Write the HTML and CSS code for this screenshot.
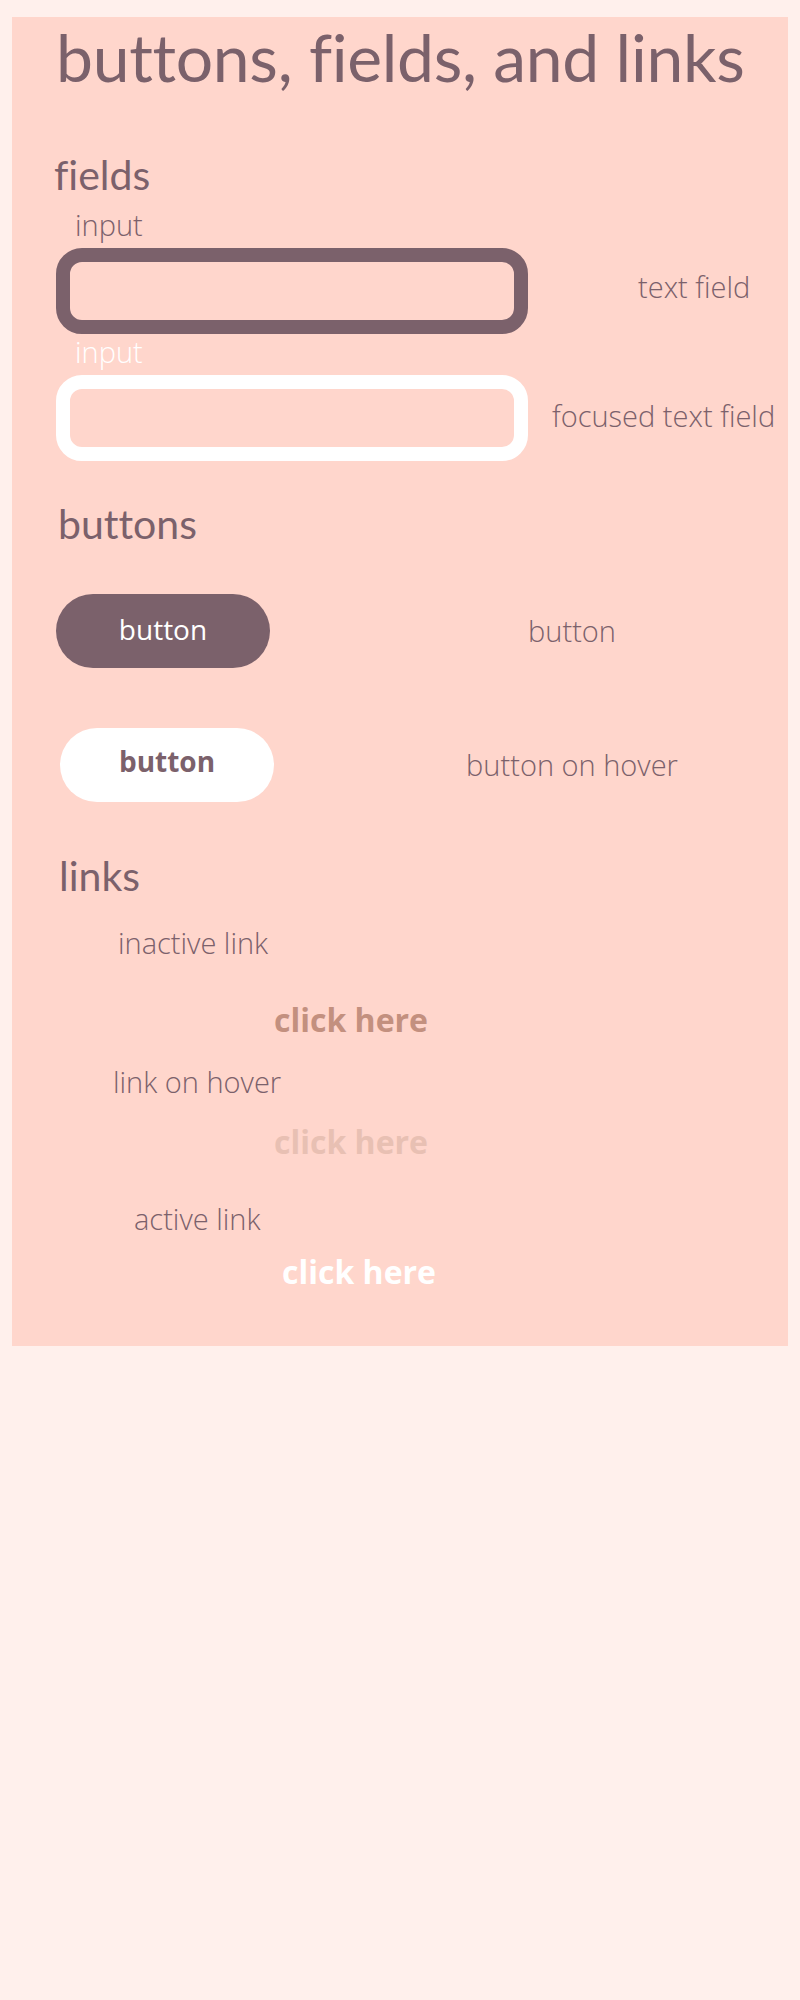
FILE: index.html
```html
<!DOCTYPE html>
<html lang="en">
<head>
<meta charset="utf-8">
<title>buttons, fields, and links</title>
<link rel="stylesheet" href="styles.css">
</head>
<body>
<main class="panel">
  <h1 class="title">buttons, fields, and links</h1>

  <section class="fields">
    <h2 class="heading heading-fields">fields</h2>
    <label class="input-label">input</label>
    <div class="field-row">
      <input class="field" type="text" aria-label="input">
      <span class="state state-text">text field</span>
    </div>
    <label class="input-label input-label-focus">input</label>
    <div class="field-row field-row-focus">
      <input class="field field-focus" type="text" aria-label="input">
      <span class="state state-focus">focused text field</span>
    </div>
  </section>

  <section class="buttons">
    <h2 class="heading heading-buttons">buttons</h2>
    <div class="button-row">
      <button class="btn" type="button">button</button>
      <span class="state state-btn">button</span>
    </div>
    <div class="button-row button-row-hover">
      <button class="btn btn-hover" type="button">button</button>
      <span class="state state-btn state-btn-hover">button on hover</span>
    </div>
  </section>

  <section class="links">
    <h2 class="heading heading-links">links</h2>
    <p class="link-label link-label-inactive">inactive link</p>
    <a class="link link-inactive" href="#">click here</a>
    <p class="link-label link-label-hover">link on hover</p>
    <a class="link link-hover" href="#">click here</a>
    <p class="link-label link-label-active">active link</p>
    <a class="link link-active" href="#">click here</a>
  </section>
</main>
</body>
</html>
```
FILE: styles.css
```css
html, body {
  margin: 0;
  padding: 0;
  background: #fff0ec;
}

body {
  color: #7b616b;
  font-family: "Open Sans", "Liberation Sans", sans-serif;
}

.panel {
  margin: 17px 12px 0;
  padding: 7px 0 58px 44px;
  background: #ffd6cc;
  display: flex;
  flex-direction: column;
  align-items: flex-start;
}

.title {
  margin: 0;
  font-family: Lato, "Liberation Sans", sans-serif;
  font-weight: 400;
  font-size: 66px;
  line-height: 66px;
  letter-spacing: -0.3px;
  font-variant-ligatures: none;
  color: #7b616b;
}

section {
  display: flex;
  flex-direction: column;
  align-items: flex-start;
  align-self: stretch;
}

.heading {
  margin: 0;
  font-family: Lato, "Liberation Sans", sans-serif;
  font-weight: 400;
  font-size: 41px;
  line-height: 41px;
  font-variant-ligatures: none;
  color: #7b616b;
}

.heading-fields { margin: 64px 0 0 -2px; }
.heading-buttons { margin: 42px 0 0 2px; }
.heading-links { margin: 53px 0 0 3px; }

.input-label {
  display: block;
  margin: 15px 0 0 19px;
  font-size: 29px;
  line-height: 29px;
  font-weight: 300;
  color: #7b616b;
}

.input-label-focus {
  margin-top: 3px;
  color: #ffffff;
}

.field-row {
  display: flex;
  align-items: center;
  margin-top: 9px;
}

.field-row-focus { margin-top: 9px; }

.field {
  -webkit-appearance: none;
  appearance: none;
  box-sizing: border-box;
  width: 472px;
  height: 86px;
  margin: 0;
  border: 14px solid #7b616b;
  border-radius: 26px;
  background: transparent;
  outline: none;
}

.field-focus {
  border-color: #ffffff;
}

.state {
  font-size: 29px;
  line-height: 29px;
  font-weight: 300;
  color: #7b616b;
  white-space: nowrap;
}

.state-text {
  margin: 0 0 9px 110px;
}

.state-focus {
  margin: 0 0 6px 24px;
}

.button-row {
  display: grid;
  grid-template-columns: 218px 400px;
  column-gap: 98px;
  align-items: center;
  margin-top: 50px;
}

.button-row-hover { margin-top: 60px; }

.btn {
  box-sizing: border-box;
  width: 214px;
  height: 74px;
  margin: 0;
  padding: 0 0 5px;
  border: none;
  border-radius: 37px;
  background: #7b616b;
  color: #ffffff;
  font-family: "Open Sans", "Liberation Sans", sans-serif;
  font-size: 28px;
  line-height: 28px;
  font-weight: 400;
  cursor: pointer;
}

.btn-hover {
  margin-left: 4px;
  padding-bottom: 8px;
  background: #ffffff;
  color: #7b616b;
  font-weight: 700;
}

.state-btn {
  text-align: center;
  margin-bottom: 2px;
}

.link-label {
  margin: 0;
  font-size: 29px;
  line-height: 29px;
  font-weight: 300;
  color: #7b616b;
}

.link-label-inactive { margin: 32px 0 0 62px; }
.link-label-hover { margin: 31px 0 0 57px; }
.link-label-active { margin: 46px 0 0 78px; }

.link {
  display: block;
  font-size: 32px;
  line-height: 32px;
  font-weight: 700;
  text-decoration: none;
}

.link-inactive { margin: 47px 0 0 218px; color: #c3907f; }
.link-hover { margin: 30px 0 0 218px; color: #e8c0b3; }
.link-active { margin: 23px 0 0 226px; color: #ffffff; }
```
